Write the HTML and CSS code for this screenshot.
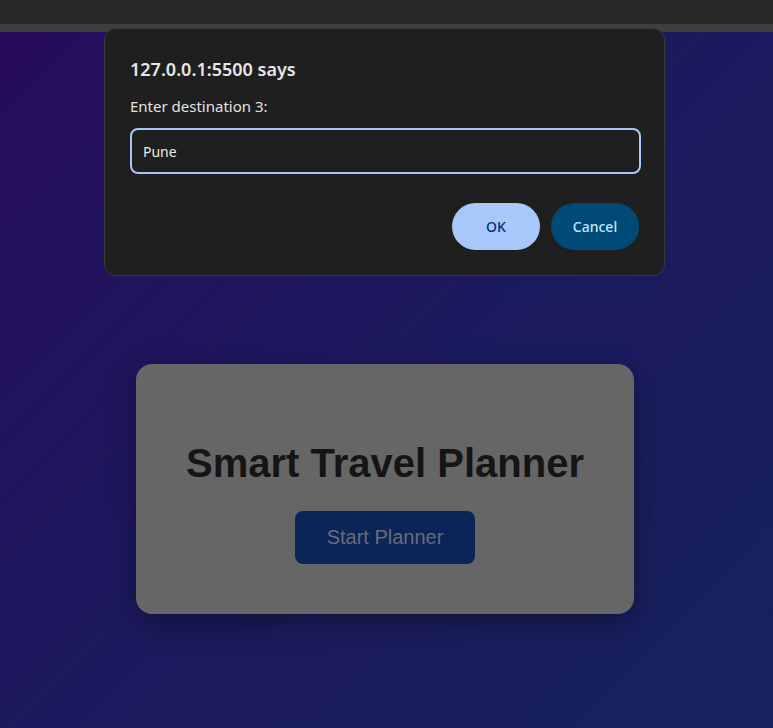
FILE: index.html
```html
<!DOCTYPE html>
<html lang="en">
<head>
<meta charset="utf-8">
<title>Smart Travel Planner</title>
<link rel="stylesheet" href="styles.css">
</head>
<body>
<div class="topbar"></div>
<div class="strip"></div>
<main class="page">
  <section class="card">
    <h1 class="card-title">Smart Travel Planner</h1>
    <button class="start-btn" type="button">Start Planner</button>
  </section>
</main>
<div class="dialog" role="dialog">
  <div class="dialog-title">127.0.0.1:5500 says</div>
  <div class="dialog-label">Enter destination 3:</div>
  <div class="dialog-input">Pune</div>
  <div class="dialog-actions">
    <button class="btn btn-ok" type="button">OK</button>
    <button class="btn btn-cancel" type="button">Cancel</button>
  </div>
</div>
</body>
</html>
```
FILE: styles.css
```css
* { box-sizing: border-box; }
html, body { margin: 0; padding: 0; }
body {
  width: 773px;
  height: 728px;
  overflow: hidden;
  background: #1b1a5e;
  font-family: "Liberation Sans", Arial, sans-serif;
}
.topbar { height: 24px; background: #292929; }
.strip { height: 8px; background: #3e3e3e; }
.page {
  height: 696px;
  background: linear-gradient(135deg, #270c5a 0%, #1c1a5e 50%, #17225f 100%);
  display: flex;
  justify-content: center;
  align-items: flex-start;
  padding: 332px 3px 0 0;
}
.card {
  width: 498px;
  height: 250px;
  background: #666666;
  border-radius: 16px;
  box-shadow: 0 10px 30px rgba(0, 0, 0, 0.35);
  display: flex;
  flex-direction: column;
  align-items: center;
  padding-top: 76px;
}
.card-title {
  margin: 0;
  font-size: 40px;
  line-height: 46px;
  font-weight: bold;
  color: #151515;
}
.start-btn {
  margin-top: 25px;
  width: 180px;
  height: 53px;
  border: none;
  border-radius: 8px;
  background: #0a2558;
  color: #6a6b78;
  font-family: "Liberation Sans", Arial, sans-serif;
  font-size: 20px;
  padding: 0;
}
.dialog {
  position: absolute;
  top: 28px;
  left: 104px;
  width: 561px;
  height: 248px;
  background: #1f1f1f;
  border: 1px solid #3a3a3a;
  border-radius: 12px;
  padding: 28px 24px 0 25px;
  font-family: "Noto Sans", "Open Sans", sans-serif;
  color: #e3e3e3;
}
.dialog-title {
  font-size: 18px;
  line-height: 24px;
  font-weight: 600;
  color: #e6e6e6;
}
.dialog-label {
  margin-top: 15px;
  font-size: 15px;
  line-height: 20px;
  color: #e3e3e3;
}
.dialog-input {
  margin-top: 12px;
  width: 511px;
  height: 46px;
  border: 2px solid #a8c7fa;
  border-radius: 8px;
  padding: 0 11px;
  display: flex;
  align-items: center;
  font-size: 14px;
  color: #e8e8e8;
}
.dialog-actions {
  margin-top: 29px;
  display: flex;
  justify-content: flex-end;
  gap: 11px;
  padding-right: 1px;
}
.btn {
  width: 88px;
  height: 47px;
  border: none;
  border-radius: 24px;
  font-family: "Noto Sans", "Open Sans", sans-serif;
  font-size: 14px;
  font-weight: 500;
  padding: 0;
}
.btn-ok { background: #a8c7fa; color: #062e6f; }
.btn-cancel { background: #004a77; color: #c2e7ff; }
```
